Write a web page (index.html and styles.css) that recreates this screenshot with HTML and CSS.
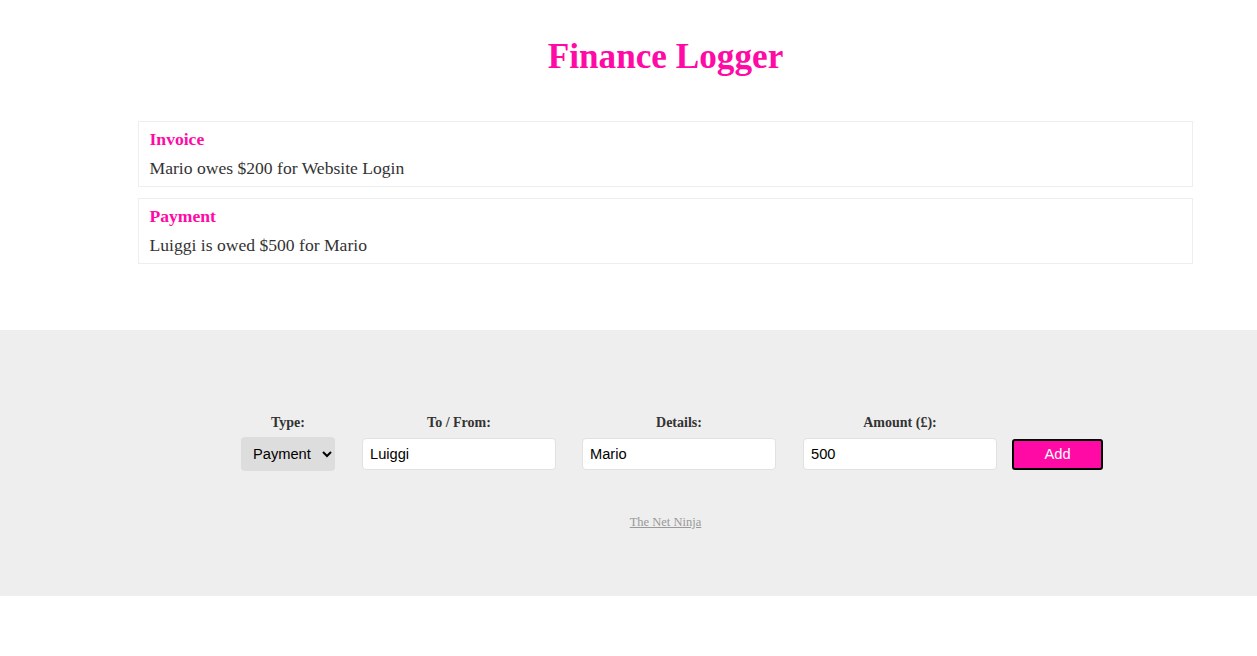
FILE: index.html
```html
<!DOCTYPE html>
<html lang="en">
<head>
<meta charset="utf-8">
<title>Finance Logger</title>
<link rel="stylesheet" href="styles.css">
</head>
<body>
  <header class="header">
    <h1 class="title">Finance Logger</h1>
  </header>
  <div class="wrapper">
    <ul class="item-list">
      <li class="item">
        <h4 class="item-type">Invoice</h4>
        <p class="item-text">Mario owes $200 for Website Login</p>
      </li>
      <li class="item">
        <h4 class="item-type">Payment</h4>
        <p class="item-text">Luiggi is owed $500 for Mario</p>
      </li>
    </ul>
  </div>
  <footer class="footer">
    <div class="footer-inner">
      <form class="new-item-form">
        <div class="field field-wide">
          <label class="field-label">Type:</label>
          <div class="control">
            <select class="select">
              <option>Invoice</option>
              <option selected>Payment</option>
            </select>
          </div>
        </div>
        <div class="field">
          <label class="field-label">To / From:</label>
          <div class="control"><input class="text-input" type="text" value="Luiggi"></div>
        </div>
        <div class="field field-wide">
          <label class="field-label">Details:</label>
          <div class="control"><input class="text-input" type="text" value="Mario"></div>
        </div>
        <div class="field field-last">
          <label class="field-label">Amount (£):</label>
          <div class="control"><input class="text-input" type="text" value="500"></div>
        </div>
        <div class="control">
          <button class="add-btn" type="button">Add</button>
        </div>
      </form>
      <p class="credit"><a class="credit-link" href="#">The Net Ninja</a></p>
    </div>
  </footer>
</body>
</html>
```

FILE: styles.css
```css
html, body {
  margin: 0;
  padding: 0;
  background: #fff;
}
body {
  font-family: "Liberation Serif", "Times New Roman", serif;
  color: #333;
}
.header {
  padding: 37px 64px 0 138px;
  text-align: center;
}
.title {
  margin: 0;
  font-size: 35.2px;
  line-height: 40px;
  font-weight: bold;
  color: #ff0aa5;
}
.wrapper {
  margin: 0 64px 0 138px;
}
.item-list {
  list-style: none;
  margin: 44px 0 0;
  padding: 0;
}
.item {
  border: 1px solid #eee;
  padding: 7px 11px 7px 10.5px;
  margin-bottom: 11px;
}
.item:last-child {
  margin-bottom: 0;
}
.item-type {
  margin: 0;
  font-size: 17.6px;
  line-height: 21px;
  font-weight: bold;
  color: #ff0aa5;
}
.item-text {
  margin: 8px 0 0;
  font-size: 17.6px;
  line-height: 21px;
  color: #333;
}
.footer {
  margin-top: 66px;
  background: #eee;
  padding: 85px 0 66px;
}
.footer-inner {
  margin: 0 64px 0 138px;
  text-align: center;
}
.new-item-form {
  display: flex;
  align-items: flex-end;
  padding-left: 103px;
}
.field {
  display: flex;
  flex-direction: column;
  align-items: center;
  margin-right: 26px;
}
.field-wide {
  margin-right: 27px;
}
.field-last {
  margin-right: 15px;
}
.field-label {
  display: block;
  font-size: 14px;
  line-height: 16px;
  font-weight: bold;
  color: #333;
  margin-bottom: 6px;
}
.control {
  height: 34px;
  display: flex;
  align-items: center;
}
.select {
  width: 94px;
  height: 34px;
  padding: 0 4px 0 8px;
  border: 0;
  border-radius: 4px;
  background-color: #ddd;
  font-family: "Liberation Sans", Arial, sans-serif;
  font-size: 14.67px;
  color: #000;
}
.text-input {
  box-sizing: border-box;
  width: 194px;
  height: 32px;
  padding: 0 7px;
  border: 1px solid #e1e1e1;
  border-radius: 4px;
  background: #fff;
  font-family: "Liberation Sans", Arial, sans-serif;
  font-size: 14.67px;
  color: #000;
}
.add-btn {
  box-sizing: border-box;
  width: 91px;
  height: 31px;
  border: 2px solid #000;
  border-radius: 3px;
  background: #ff0aa5;
  color: #fff;
  font-family: "Liberation Sans", Arial, sans-serif;
  font-size: 14.67px;
  line-height: 26px;
  padding: 0 0 1px;
}
.credit {
  margin: 44px 0 0;
  font-size: 12.5px;
  line-height: 15px;
}
.credit-link {
  color: #999;
}
```
